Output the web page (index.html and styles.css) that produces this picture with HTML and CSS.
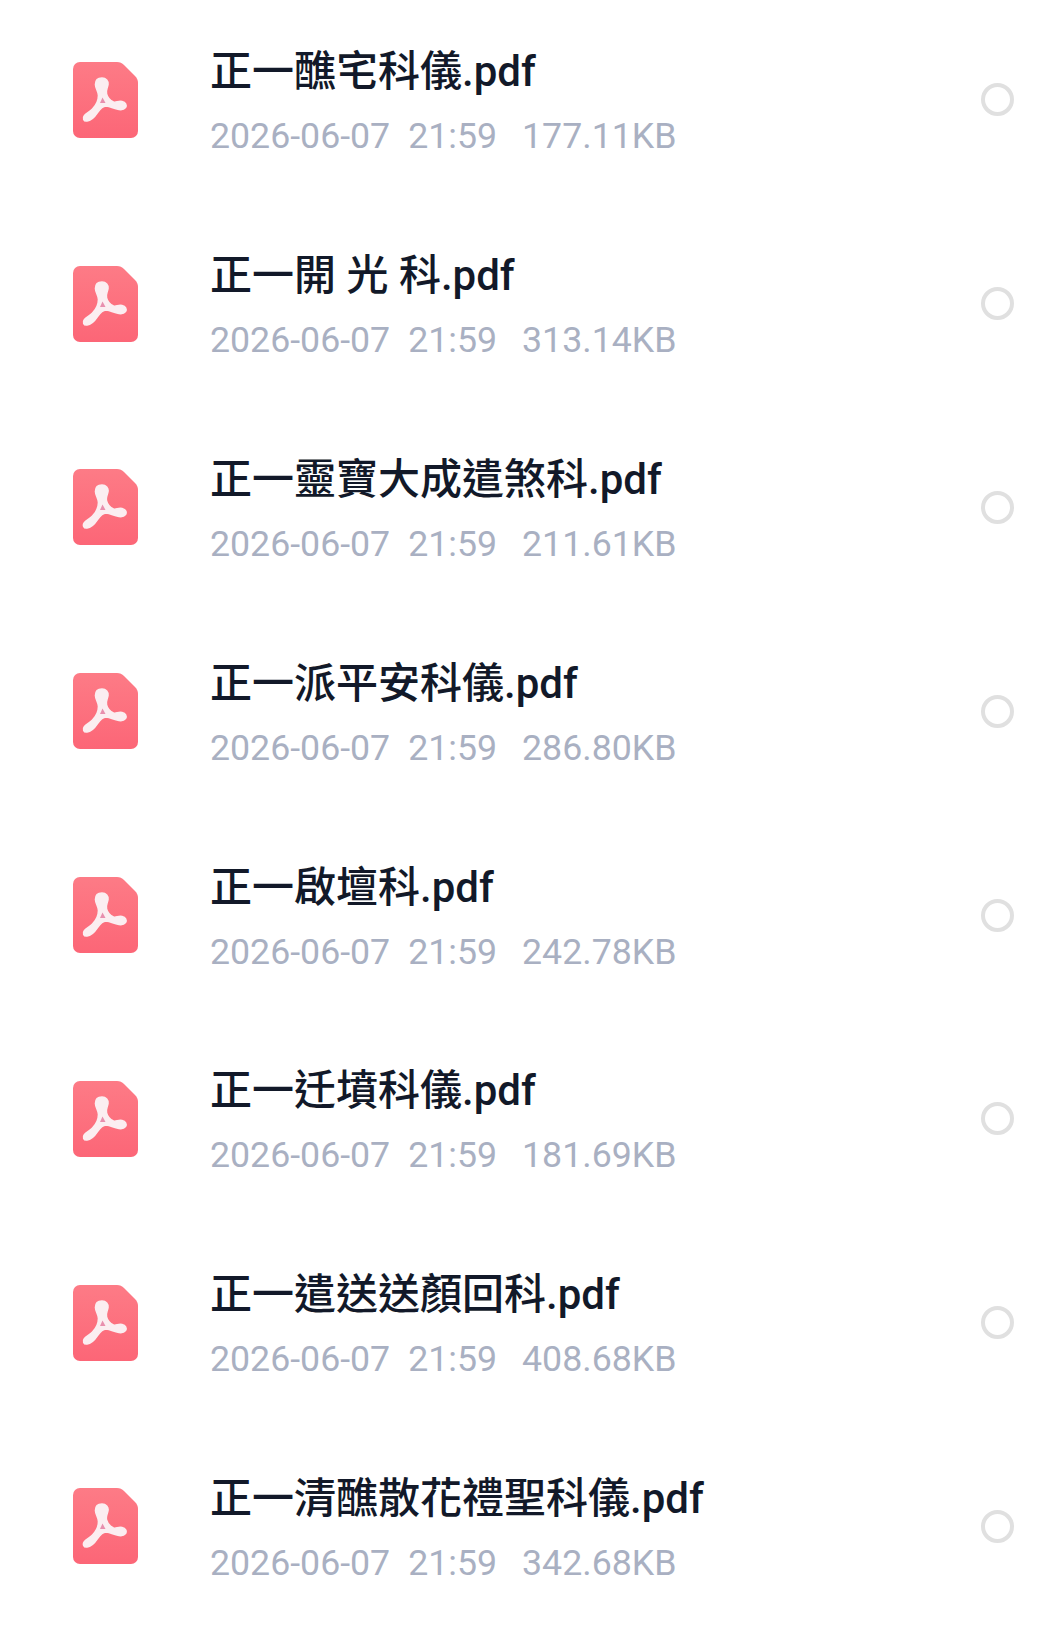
FILE: index.html
```html
<!DOCTYPE html>
<html lang="zh-TW">
<head>
    <meta charset="UTF-8">
    <title>PDF</title>
    <link rel="stylesheet" href="styles.css">
</head>
<body>

<svg class="defs" width="0" height="0">
    <defs>
        <linearGradient id="fundo" x1="0" y1="0" x2="0" y2="1">
            <stop offset="0" stop-color="#fd7b86"/>
            <stop offset="1" stop-color="#fc6677"/>
        </linearGradient>
    </defs>
    <symbol id="pdf" viewBox="0 0 65 76">
        <path d="M7 0H44C47 0 49 1 51 3L62 14C64 16 65 18 65 21V69a7 7 0 0 1-7 7H7a7 7 0 0 1-7-7V7a7 7 0 0 1 7-7Z" fill="url(#fundo)"/>
        <path d="M29 16C33 16 35.500 19 35 22.500C34.500 26 32.500 28 33.500 32C34.500 36 37 38.500 40.500 40C43 41 45.500 38.500 49 39.500C52.500 40.500 54 43 52.500 45.500C51 47.500 47.500 48 44 47C40 46 37 44.500 33 44C29.500 44 27 47 24.500 50.500C21.500 55 18 58.500 14 59C10.500 59.500 9.500 56 11.500 53.500C13.500 51 16.500 50 19.500 47C23 43.500 25.500 38.500 25.500 33.500C25.500 29.500 22.500 26.500 22.500 22.500C22.500 18.500 25 16 29 16Z" fill="#fbeef1" stroke="#fbeef1" stroke-width="1.600" stroke-linejoin="round"/>
        <path d="M29.500 35.500L32.500 41H27Z" fill="#e88fae"/>
    </symbol>
</svg>

<ul class="lista">
    <li class="item">
        <svg class="icone"><use href="#pdf"/></svg>
        <div class="info">
            <div class="nome">正一醮宅科儀.pdf</div>
            <div class="meta"><span>2026-06-07</span><span class="hora">21:59</span><span class="tam">177.11KB</span></div>
        </div>
        <span class="radio"></span>
    </li>
    <li class="item">
        <svg class="icone"><use href="#pdf"/></svg>
        <div class="info">
            <div class="nome">正一開 光 科.pdf</div>
            <div class="meta"><span>2026-06-07</span><span class="hora">21:59</span><span class="tam">313.14KB</span></div>
        </div>
        <span class="radio"></span>
    </li>
    <li class="item">
        <svg class="icone"><use href="#pdf"/></svg>
        <div class="info">
            <div class="nome">正一靈寶大成遣煞科.pdf</div>
            <div class="meta"><span>2026-06-07</span><span class="hora">21:59</span><span class="tam">211.61KB</span></div>
        </div>
        <span class="radio"></span>
    </li>
    <li class="item">
        <svg class="icone"><use href="#pdf"/></svg>
        <div class="info">
            <div class="nome">正一派平安科儀.pdf</div>
            <div class="meta"><span>2026-06-07</span><span class="hora">21:59</span><span class="tam">286.80KB</span></div>
        </div>
        <span class="radio"></span>
    </li>
    <li class="item">
        <svg class="icone"><use href="#pdf"/></svg>
        <div class="info">
            <div class="nome">正一啟壇科.pdf</div>
            <div class="meta"><span>2026-06-07</span><span class="hora">21:59</span><span class="tam">242.78KB</span></div>
        </div>
        <span class="radio"></span>
    </li>
    <li class="item">
        <svg class="icone"><use href="#pdf"/></svg>
        <div class="info">
            <div class="nome">正一迁墳科儀.pdf</div>
            <div class="meta"><span>2026-06-07</span><span class="hora">21:59</span><span class="tam">181.69KB</span></div>
        </div>
        <span class="radio"></span>
    </li>
    <li class="item">
        <svg class="icone"><use href="#pdf"/></svg>
        <div class="info">
            <div class="nome">正一遣送送顏回科.pdf</div>
            <div class="meta"><span>2026-06-07</span><span class="hora">21:59</span><span class="tam">408.68KB</span></div>
        </div>
        <span class="radio"></span>
    </li>
    <li class="item">
        <svg class="icone"><use href="#pdf"/></svg>
        <div class="info">
            <div class="nome">正一清醮散花禮聖科儀.pdf</div>
            <div class="meta"><span>2026-06-07</span><span class="hora">21:59</span><span class="tam">342.68KB</span></div>
        </div>
        <span class="radio"></span>
    </li>
</ul>

</body>
</html>
```

FILE: styles.css
```css
body {
    margin: 0;
    background-color: #fff;
    font-family: "Roboto", "Noto Sans CJK TC", sans-serif;
}
.defs {
    position: absolute;
}
.lista {
    list-style: none;
    margin: 0;
    padding: 0;
}
.item {
    display: flex;
    align-items: center;
    box-sizing: border-box;
    height: 203.8px;
    padding: 0 36px 4px 73px;
}
.icone {
    width: 65px;
    height: 76px;
    flex: none;
}
.info {
    flex: 1;
    margin-top: 4px;
    margin-left: 72px;
}
.nome {
    font-size: 42px;
    font-weight: 500;
    line-height: 54px;
    color: #121929;
}
.meta {
    margin-top: 15px;
    font-size: 35.7px;
    line-height: 44px;
    color: #a9b0c2;
}
.hora {
    margin-left: 18px;
}
.tam {
    margin-left: 25px;
}
.radio {
    width: 33px;
    height: 33px;
    box-sizing: border-box;
    border: 4px solid #e0e0e0;
    border-radius: 50%;
}
```
